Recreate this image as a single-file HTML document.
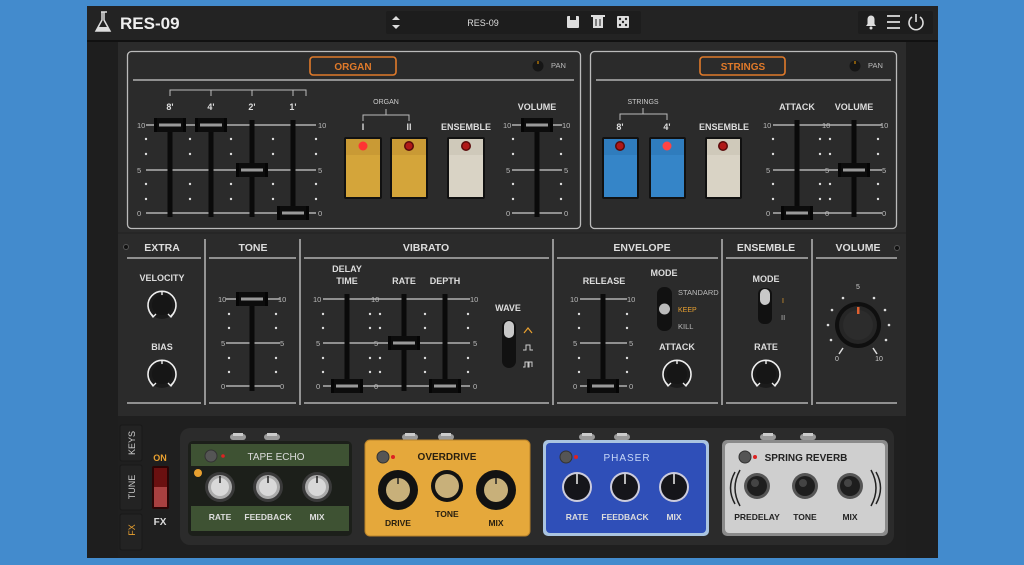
<!DOCTYPE html>
<html><head><meta charset="utf-8"><style>
html,body{margin:0;padding:0;background:#438bcd;width:1024px;height:565px;overflow:hidden}
svg{display:block}
text{font-family:"Liberation Sans",sans-serif;}
.l{font-weight:bold;fill:#ddd;font-size:9px;text-anchor:middle}
.h{font-weight:bold;fill:#ddd;font-size:10.5px;text-anchor:middle}
.s{fill:#bbb;font-size:7.5px}
.sm{fill:#ccc;font-size:7px;text-anchor:middle}
</style></head><body>
<svg width="1024" height="565" viewBox="0 0 1024 565">
<defs>
<g id="hd"><rect x="-16" y="-7" width="32" height="14" rx="2" fill="#0c0c0c"/><rect x="-16" y="-7" width="3" height="14" fill="#050505"/><rect x="13" y="-7" width="3" height="14" fill="#050505"/><rect x="-11" y="-1.5" width="22" height="3" fill="#9a9a9a"/></g>
<g id="kn"><circle r="14" fill="#1b1b1b"/><path d="M-9,11 A14,14 0 1 1 9,11" fill="none" stroke="#eee" stroke-width="1.6"/><path d="M-12,8 l3,4 l3,-3 M12,8 l-3,4 l-3,-3" fill="none" stroke="#eee" stroke-width="1.3"/><line x1="0" y1="-13" x2="0" y2="-8" stroke="#eee" stroke-width="1.4"/><circle r="10" fill="#161616"/></g>
<g id="dot"><circle r="1.2" fill="#ddd"/></g>
<g id="jack"><rect x="-8" y="-3" width="16" height="6" rx="3" fill="#9a9a9a"/><rect x="-5" y="-4" width="10" height="3" fill="#ccc"/></g>
<g id="sk"><circle r="15" fill="#3a3a3a"/><circle r="12" fill="#aaa"/><circle r="9" fill="#d8d8d8"/><line x1="0" y1="-11" x2="0" y2="-4" stroke="#222" stroke-width="1.5"/></g>
<g id="bk"><circle r="15" fill="#ccd"/><circle r="13" fill="#15151a"/><line x1="0" y1="-13" x2="0" y2="-3" stroke="#eee" stroke-width="1.5"/></g>
<g id="rk"><circle r="13" fill="#555"/><circle r="10" fill="#1e1e1e"/><circle cx="-2" cy="-3" r="4" fill="#444"/></g>
<g id="led"><circle r="5" fill="#5a0a0a"/><circle r="3.5" fill="#b01818"/></g>
</defs>

<!-- window -->
<rect x="87" y="6" width="851" height="552" fill="#262626"/>
<rect x="87" y="6" width="851" height="35" fill="#232323"/>
<line x1="87" y1="41" x2="938" y2="41" stroke="#111" stroke-width="2"/>
<rect x="87" y="42" width="31" height="516" fill="#1e1e1e"/>
<rect x="906" y="42" width="32" height="516" fill="#1e1e1e"/>
<rect x="118" y="42" width="788" height="374" fill="#2b2b2b"/>
<rect x="118" y="416" width="788" height="142" fill="#1f1f1f"/>

<!-- topbar -->
<path d="M101,12 h6 M102,12 v8 l-6,11 h14 l-6,-11 v-8" fill="none" stroke="#ddd" stroke-width="1.5"/>
<path d="M98,27 h10 l2,4 h-14z" fill="#ddd"/>
<text x="120" y="29" font-size="17" font-weight="bold" fill="#eee">RES-09</text>
<rect x="386" y="11" width="255" height="23" fill="#1d1d1d" rx="2"/>
<path d="M392,20 l4,-4 l4,4z M392,25 l4,4 l4,-4z" fill="#ddd"/>
<text x="483" y="26" font-size="9" fill="#ddd" text-anchor="middle">RES-09</text>
<rect x="567" y="16" width="12" height="12" rx="1" fill="#ddd"/><rect x="570" y="16" width="6" height="4" fill="#1d1d1d"/>
<rect x="593" y="17" width="10" height="11" fill="#ddd"/><rect x="591" y="15" width="14" height="2" fill="#ddd"/><line x1="596" y1="19" x2="596" y2="26" stroke="#1d1d1d"/><line x1="600" y1="19" x2="600" y2="26" stroke="#1d1d1d"/>
<rect x="617" y="16" width="12" height="12" rx="1" fill="#ddd"/><circle cx="620" cy="19" r="1.2" fill="#222"/><circle cx="626" cy="19" r="1.2" fill="#222"/><circle cx="623" cy="22" r="1.2" fill="#222"/><circle cx="620" cy="25" r="1.2" fill="#222"/><circle cx="626" cy="25" r="1.2" fill="#222"/>
<rect x="858" y="11" width="75" height="23" fill="#1d1d1d" rx="2"/>
<path d="M866,26 h10 l-1.5,-2 v-5 a3.5,3.5 0 0 0 -7,0 v5z" fill="#ddd"/><circle cx="871" cy="28" r="1.5" fill="#ddd"/>
<path d="M887,16 h13 M887,22 h13 M887,28 h13" stroke="#ddd" stroke-width="1.8"/>
<path d="M912,17 a7,7 0 1 0 8,0" fill="none" stroke="#ddd" stroke-width="1.6"/><line x1="916" y1="14" x2="916" y2="22" stroke="#ddd" stroke-width="1.6"/>

<!-- ORGAN panel -->
<rect x="127.5" y="51.5" width="453" height="177" rx="4" fill="none" stroke="#bbb" stroke-width="1.3"/>
<rect x="310" y="57" width="86" height="18" rx="3" fill="none" stroke="#e07a2a" stroke-width="1.6"/>
<text x="353" y="70" font-size="10" font-weight="bold" fill="#e07a2a" text-anchor="middle">ORGAN</text>
<circle cx="538" cy="66" r="5.5" fill="#161616"/><line x1="538" y1="61" x2="538" y2="64" stroke="#e90" stroke-width="1"/>
<text x="551" y="68" class="s">PAN</text>
<line x1="133" y1="80" x2="574" y2="80" stroke="#ccc" stroke-width="1.3"/>
<path d="M170,96 v-6 h136 v6 M211,90 v6 M252,90 v6 M293,90 v6" fill="none" stroke="#bbb" stroke-width="1"/>
<text x="170" y="110" class="l">8'</text><text x="211" y="110" class="l">4'</text><text x="252" y="110" class="l">2'</text><text x="293" y="110" class="l">1'</text>
<g stroke="#ccc" stroke-width="1.2"><line x1="146" y1="125" x2="316" y2="125"/><line x1="146" y1="170" x2="316" y2="170"/><line x1="146" y1="213" x2="316" y2="213"/></g>
<g class="s" font-size="7"><text x="137" y="128">10</text><text x="137" y="173">5</text><text x="137" y="216">0</text><text x="318" y="128">10</text><text x="318" y="173">5</text><text x="318" y="216">0</text></g>
<g><use href="#dot" x="146" y="139"/><use href="#dot" x="146" y="154"/><use href="#dot" x="146" y="184"/><use href="#dot" x="146" y="199"/>
<use href="#dot" x="190" y="139"/><use href="#dot" x="190" y="154"/><use href="#dot" x="190" y="184"/><use href="#dot" x="190" y="199"/>
<use href="#dot" x="231" y="139"/><use href="#dot" x="231" y="154"/><use href="#dot" x="231" y="184"/><use href="#dot" x="231" y="199"/>
<use href="#dot" x="273" y="139"/><use href="#dot" x="273" y="154"/><use href="#dot" x="273" y="184"/><use href="#dot" x="273" y="199"/>
<use href="#dot" x="316" y="139"/><use href="#dot" x="316" y="154"/><use href="#dot" x="316" y="184"/><use href="#dot" x="316" y="199"/></g>
<g fill="#0a0a0a"><rect x="167.5" y="125" width="5" height="92"/><rect x="208.5" y="125" width="5" height="92"/><rect x="249.5" y="120" width="5" height="97"/><rect x="290.5" y="120" width="5" height="97"/></g>
<use href="#hd" x="170" y="125"/><use href="#hd" x="211" y="125"/><use href="#hd" x="252" y="170"/><use href="#hd" x="293" y="213"/>
<text x="386" y="104" class="sm">ORGAN</text>
<path d="M363,121 v-6 h46 v6 M386,109 v6" fill="none" stroke="#bbb" stroke-width="1"/>
<text x="363" y="130" class="l">I</text><text x="409" y="130" class="l">II</text><text x="466" y="130" class="l">ENSEMBLE</text>
<rect x="344" y="137" width="38" height="62" rx="2" fill="#111"/><rect x="346" y="139" width="34" height="58" fill="#d4a53a"/><rect x="346" y="139" width="34" height="16" fill="#c99a35"/><circle cx="363" cy="146" r="4.5" fill="#f33"/>
<rect x="390" y="137" width="38" height="62" rx="2" fill="#111"/><rect x="392" y="139" width="34" height="58" fill="#d4a53a"/><rect x="392" y="139" width="34" height="16" fill="#c99a35"/><use href="#led" x="409" y="146"/>
<rect x="447" y="137" width="38" height="62" rx="2" fill="#111"/><rect x="449" y="139" width="34" height="58" fill="#d9d3c5"/><rect x="449" y="139" width="34" height="16" fill="#cfc9ba"/><use href="#led" x="466" y="146"/>
<text x="537" y="110" class="l">VOLUME</text>
<g stroke="#ccc" stroke-width="1.2"><line x1="512" y1="125" x2="562" y2="125"/><line x1="512" y1="170" x2="562" y2="170"/><line x1="512" y1="213" x2="562" y2="213"/></g>
<g class="s" font-size="7"><text x="503" y="128">10</text><text x="506" y="173">5</text><text x="506" y="216">0</text><text x="562" y="128">10</text><text x="564" y="173">5</text><text x="564" y="216">0</text></g>
<use href="#dot" x="513" y="139"/><use href="#dot" x="513" y="154"/><use href="#dot" x="513" y="184"/><use href="#dot" x="513" y="199"/><use href="#dot" x="561" y="139"/><use href="#dot" x="561" y="154"/><use href="#dot" x="561" y="184"/><use href="#dot" x="561" y="199"/>
<rect x="534.5" y="125" width="5" height="92" fill="#0a0a0a"/><use href="#hd" x="537" y="125"/>

<!-- STRINGS panel -->
<rect x="590.5" y="51.5" width="306" height="177" rx="4" fill="none" stroke="#bbb" stroke-width="1.3"/>
<rect x="700" y="57" width="85" height="18" rx="3" fill="none" stroke="#e07a2a" stroke-width="1.6"/>
<text x="743" y="70" font-size="10" font-weight="bold" fill="#e07a2a" text-anchor="middle">STRINGS</text>
<circle cx="855" cy="66" r="5.5" fill="#161616"/><line x1="855" y1="61" x2="855" y2="64" stroke="#e90"/>
<text x="868" y="68" class="s">PAN</text>
<line x1="596" y1="80" x2="891" y2="80" stroke="#ccc" stroke-width="1.3"/>
<text x="643" y="104" class="sm">STRINGS</text>
<path d="M620,120 v-6 h47 v6 M643,108 v6" fill="none" stroke="#bbb" stroke-width="1"/>
<text x="620" y="130" class="l">8'</text><text x="667" y="130" class="l">4'</text><text x="724" y="130" class="l">ENSEMBLE</text>
<rect x="602" y="137" width="37" height="62" rx="2" fill="#111"/><rect x="604" y="139" width="33" height="58" fill="#3585c8"/><rect x="604" y="139" width="33" height="16" fill="#2f7cbd"/><use href="#led" x="620" y="146"/>
<rect x="649" y="137" width="37" height="62" rx="2" fill="#111"/><rect x="651" y="139" width="33" height="58" fill="#3585c8"/><rect x="651" y="139" width="33" height="16" fill="#2f7cbd"/><circle cx="667" cy="146" r="4.5" fill="#f44"/>
<rect x="705" y="137" width="37" height="62" rx="2" fill="#111"/><rect x="707" y="139" width="33" height="58" fill="#d9d3c5"/><rect x="707" y="139" width="33" height="16" fill="#cfc9ba"/><use href="#led" x="723" y="146"/>
<text x="797" y="110" class="l">ATTACK</text><text x="854" y="110" class="l">VOLUME</text>
<g stroke="#ccc" stroke-width="1.2"><line x1="773" y1="125" x2="882" y2="125"/><line x1="773" y1="170" x2="882" y2="170"/><line x1="773" y1="213" x2="882" y2="213"/></g>
<g class="s" font-size="7"><text x="763" y="128">10</text><text x="766" y="173">5</text><text x="766" y="216">0</text><text x="822" y="128">10</text><text x="825" y="173">5</text><text x="825" y="216">0</text><text x="880" y="128">10</text><text x="882" y="173">5</text><text x="882" y="216">0</text></g>
<use href="#dot" x="773" y="139"/><use href="#dot" x="773" y="154"/><use href="#dot" x="773" y="184"/><use href="#dot" x="773" y="199"/>
<use href="#dot" x="820" y="139"/><use href="#dot" x="820" y="154"/><use href="#dot" x="820" y="184"/><use href="#dot" x="820" y="199"/>
<use href="#dot" x="830" y="139"/><use href="#dot" x="830" y="154"/><use href="#dot" x="830" y="184"/><use href="#dot" x="830" y="199"/>
<use href="#dot" x="878" y="139"/><use href="#dot" x="878" y="154"/><use href="#dot" x="878" y="184"/><use href="#dot" x="878" y="199"/>
<rect x="794.5" y="120" width="5" height="97" fill="#0a0a0a"/><rect x="851.5" y="120" width="5" height="97" fill="#0a0a0a"/>
<use href="#hd" x="797" y="213"/><use href="#hd" x="854" y="170"/>

<!-- lower sections -->
<line x1="118" y1="233" x2="906" y2="233" stroke="#222" stroke-width="1"/>
<g stroke="#ccc" stroke-width="1.3">
<line x1="205" y1="239" x2="205" y2="405"/><line x1="300" y1="239" x2="300" y2="405"/><line x1="553" y1="239" x2="553" y2="405"/><line x1="722" y1="239" x2="722" y2="405"/><line x1="812" y1="239" x2="812" y2="405"/>
<line x1="127" y1="258" x2="201" y2="258"/><line x1="209" y1="258" x2="296" y2="258"/><line x1="304" y1="258" x2="549" y2="258"/><line x1="557" y1="258" x2="718" y2="258"/><line x1="726" y1="258" x2="808" y2="258"/><line x1="816" y1="258" x2="897" y2="258"/>
<line x1="127" y1="403" x2="201" y2="403"/><line x1="209" y1="403" x2="296" y2="403"/><line x1="304" y1="403" x2="549" y2="403"/><line x1="557" y1="403" x2="718" y2="403"/><line x1="726" y1="403" x2="808" y2="403"/><line x1="816" y1="403" x2="897" y2="403"/>
</g>
<circle cx="126" cy="247" r="2.5" fill="#111" stroke="#555"/><circle cx="897" cy="248" r="2.5" fill="#111" stroke="#555"/>
<text x="162" y="251" class="h">EXTRA</text><text x="253" y="251" class="h">TONE</text><text x="426" y="251" class="h">VIBRATO</text><text x="642" y="251" class="h">ENVELOPE</text><text x="766" y="251" class="h">ENSEMBLE</text><text x="858" y="251" class="h">VOLUME</text>
<text x="162" y="281" class="l">VELOCITY</text><use href="#kn" x="162" y="305"/>
<text x="162" y="350" class="l">BIAS</text><use href="#kn" x="162" y="374"/>
<!-- tone -->
<g stroke="#ccc" stroke-width="1.2"><line x1="226" y1="299" x2="280" y2="299"/><line x1="226" y1="343" x2="280" y2="343"/><line x1="226" y1="386" x2="280" y2="386"/></g>
<g class="s" font-size="7"><text x="218" y="302">10</text><text x="221" y="346">5</text><text x="221" y="389">0</text><text x="278" y="302">10</text><text x="280" y="346">5</text><text x="280" y="389">0</text></g>
<use href="#dot" x="229" y="314"/><use href="#dot" x="229" y="328"/><use href="#dot" x="229" y="358"/><use href="#dot" x="229" y="372"/><use href="#dot" x="276" y="314"/><use href="#dot" x="276" y="328"/><use href="#dot" x="276" y="358"/><use href="#dot" x="276" y="372"/>
<rect x="249.5" y="299" width="5" height="92" fill="#0a0a0a"/><use href="#hd" x="252" y="299"/>
<!-- vibrato -->
<text x="347" y="272" class="l">DELAY</text><text x="347" y="284" class="l">TIME</text><text x="404" y="284" class="l">RATE</text><text x="445" y="284" class="l">DEPTH</text>
<g stroke="#ccc" stroke-width="1.2"><line x1="323" y1="299" x2="470" y2="299"/><line x1="323" y1="343" x2="470" y2="343"/><line x1="323" y1="386" x2="470" y2="386"/></g>
<g class="s" font-size="7"><text x="313" y="302">10</text><text x="316" y="346">5</text><text x="316" y="389">0</text><text x="371" y="302">10</text><text x="374" y="346">5</text><text x="374" y="389">0</text><text x="470" y="302">10</text><text x="473" y="346">5</text><text x="473" y="389">0</text></g>
<use href="#dot" x="323" y="314"/><use href="#dot" x="323" y="328"/><use href="#dot" x="323" y="358"/><use href="#dot" x="323" y="372"/>
<use href="#dot" x="370" y="314"/><use href="#dot" x="370" y="328"/><use href="#dot" x="370" y="358"/><use href="#dot" x="370" y="372"/>
<use href="#dot" x="380" y="314"/><use href="#dot" x="380" y="328"/><use href="#dot" x="380" y="358"/><use href="#dot" x="380" y="372"/>
<use href="#dot" x="425" y="314"/><use href="#dot" x="425" y="328"/><use href="#dot" x="425" y="358"/><use href="#dot" x="425" y="372"/>
<use href="#dot" x="468" y="314"/><use href="#dot" x="468" y="328"/><use href="#dot" x="468" y="358"/><use href="#dot" x="468" y="372"/>
<rect x="344.5" y="294" width="5" height="97" fill="#0a0a0a"/><rect x="401.5" y="294" width="5" height="97" fill="#0a0a0a"/><rect x="442.5" y="294" width="5" height="97" fill="#0a0a0a"/>
<use href="#hd" x="347" y="386"/><use href="#hd" x="404" y="343"/><use href="#hd" x="445" y="386"/>
<text x="508" y="311" class="l">WAVE</text>
<rect x="502" y="320" width="14" height="48" rx="7" fill="#111"/><rect x="504" y="321" width="10" height="17" rx="5" fill="#c8c8c8"/>
<path d="M524,333 l4,-5 l4,5" fill="none" stroke="#e8a030" stroke-width="1.2"/>
<path d="M523,350 h3 v-5 h4 v5 h3" fill="none" stroke="#ccc" stroke-width="1"/>
<path d="M523,367 h2 v-5 h3 v5 h1 v-5 h3 v5" fill="none" stroke="#ccc" stroke-width="1"/>
<!-- envelope -->
<text x="604" y="284" class="l">RELEASE</text>
<g stroke="#ccc" stroke-width="1.2"><line x1="580" y1="299" x2="627" y2="299"/><line x1="580" y1="343" x2="627" y2="343"/><line x1="580" y1="386" x2="627" y2="386"/></g>
<g class="s" font-size="7"><text x="570" y="302">10</text><text x="573" y="346">5</text><text x="573" y="389">0</text><text x="627" y="302">10</text><text x="629" y="346">5</text><text x="629" y="389">0</text></g>
<use href="#dot" x="579" y="314"/><use href="#dot" x="579" y="328"/><use href="#dot" x="579" y="358"/><use href="#dot" x="579" y="372"/><use href="#dot" x="627" y="314"/><use href="#dot" x="627" y="328"/><use href="#dot" x="627" y="358"/><use href="#dot" x="627" y="372"/>
<rect x="600.5" y="294" width="5" height="97" fill="#0a0a0a"/><use href="#hd" x="603" y="386"/>
<text x="664" y="276" class="l">MODE</text>
<rect x="657" y="287" width="15" height="44" rx="7" fill="#111"/><circle cx="664.5" cy="309" r="5.5" fill="#bbb"/>
<text x="678" y="295" class="s" font-size="7">STANDARD</text><text x="678" y="312" font-size="7" fill="#e8a030">KEEP</text><text x="678" y="329" class="s" font-size="7">KILL</text>
<text x="677" y="350" class="l">ATTACK</text><use href="#kn" x="677" y="374"/>
<!-- ensemble -->
<text x="766" y="282" class="l">MODE</text>
<rect x="758" y="288" width="14" height="36" rx="6" fill="#111"/><rect x="760" y="289" width="10" height="16" rx="5" fill="#c8c8c8"/>
<text x="782" y="303" font-size="7" fill="#e8a030">I</text><text x="781" y="320" class="s" font-size="7">II</text>
<text x="766" y="350" class="l">RATE</text><use href="#kn" x="766" y="374"/>
<!-- volume big knob -->
<text x="858" y="289" class="sm">5</text><text x="837" y="361" class="sm">0</text><text x="879" y="361" class="sm">10</text>
<g fill="#ddd"><circle cx="843" cy="298" r="1.3"/><circle cx="874" cy="298" r="1.3"/><circle cx="832" cy="310" r="1.3"/><circle cx="885" cy="310" r="1.3"/><circle cx="828" cy="325" r="1.3"/><circle cx="889" cy="325" r="1.3"/><circle cx="831" cy="340" r="1.3"/><circle cx="886" cy="340" r="1.3"/></g>
<path d="M843,348 l-4,6 M873,348 l4,6" stroke="#ddd" stroke-width="1.5"/>
<circle cx="858" cy="325" r="23" fill="#0f0f0f"/><circle cx="858" cy="325" r="19" fill="#262626"/><circle cx="858" cy="325" r="15" fill="#2c2c2c"/>
<rect x="857" y="307" width="2.5" height="7" fill="#e06030"/>

<!-- FX area -->
<rect x="120" y="425" width="22" height="36" rx="2" fill="#232323" stroke="#181818"/>
<rect x="120" y="465" width="22" height="45" rx="2" fill="#232323" stroke="#181818"/>
<rect x="120" y="514" width="22" height="36" rx="2" fill="#232323" stroke="#181818"/>
<text transform="translate(135,443) rotate(-90)" font-size="9" fill="#ccc" text-anchor="middle">KEYS</text>
<text transform="translate(135,487) rotate(-90)" font-size="9" fill="#ccc" text-anchor="middle">TUNE</text>
<text transform="translate(135,530) rotate(-90)" font-size="9" fill="#e8a030" text-anchor="middle">FX</text>
<text x="160" y="461" font-size="9" font-weight="bold" fill="#e8a030" text-anchor="middle">ON</text>
<rect x="152" y="466" width="17" height="43" rx="2" fill="#2a0505"/><rect x="154" y="468" width="13" height="19" fill="#6a1010"/><rect x="154" y="487" width="13" height="20" fill="#a84040"/>
<text x="160" y="525" font-size="10" font-weight="bold" fill="#ddd" text-anchor="middle">FX</text>
<rect x="180" y="428" width="714" height="117" rx="10" fill="#2b2b2b"/>
<use href="#jack" x="238" y="437"/><use href="#jack" x="272" y="437"/><use href="#jack" x="410" y="437"/><use href="#jack" x="446" y="437"/><use href="#jack" x="587" y="437"/><use href="#jack" x="622" y="437"/><use href="#jack" x="768" y="437"/><use href="#jack" x="808" y="437"/>
<!-- tape echo -->
<rect x="188" y="441" width="164" height="95" rx="5" fill="#1c1f1a"/>
<rect x="191" y="444" width="158" height="22" fill="#3e5233"/>
<rect x="191" y="506" width="158" height="25" fill="#3e5233"/>
<circle cx="211" cy="456" r="6" fill="#555" stroke="#333"/><circle cx="223" cy="456" r="1.8" fill="#d22"/>
<text x="276" y="460" font-size="10" fill="#ddd" text-anchor="middle">TAPE ECHO</text>
<circle cx="198" cy="473" r="4" fill="#e8a030"/>
<use href="#sk" x="220" y="487"/><use href="#sk" x="268" y="487"/><use href="#sk" x="317" y="487"/>
<text x="220" y="520" font-size="8.5" font-weight="bold" fill="#ddd" text-anchor="middle">RATE</text><text x="268" y="520" font-size="8.5" font-weight="bold" fill="#ddd" text-anchor="middle">FEEDBACK</text><text x="317" y="520" font-size="8.5" font-weight="bold" fill="#ddd" text-anchor="middle">MIX</text>
<!-- overdrive -->
<rect x="365" y="440" width="165" height="96" rx="5" fill="#e5a83b" stroke="#b8822a"/>
<circle cx="383" cy="457" r="6" fill="#555" stroke="#333"/><circle cx="393" cy="457" r="2" fill="#d22"/>
<text x="447" y="460" font-size="10" font-weight="bold" fill="#2a2010" text-anchor="middle">OVERDRIVE</text>
<circle cx="398" cy="490" r="20" fill="#121212"/><circle cx="398" cy="490" r="12" fill="#c8b07a"/><line x1="398" y1="478" x2="398" y2="484" stroke="#222" stroke-width="1.5"/>
<circle cx="447" cy="486" r="16" fill="#121212"/><circle cx="447" cy="486" r="12" fill="#c8b07a"/>
<circle cx="496" cy="490" r="20" fill="#121212"/><circle cx="496" cy="490" r="12" fill="#c8b07a"/><line x1="496" y1="478" x2="496" y2="484" stroke="#222" stroke-width="1.5"/>
<text x="398" y="526" font-size="8.5" font-weight="bold" fill="#2a2010" text-anchor="middle">DRIVE</text><text x="447" y="517" font-size="8.5" font-weight="bold" fill="#2a2010" text-anchor="middle">TONE</text><text x="496" y="526" font-size="8.5" font-weight="bold" fill="#2a2010" text-anchor="middle">MIX</text>
<!-- phaser -->
<rect x="543" y="440" width="166" height="96" rx="5" fill="#aac4e0"/>
<rect x="546" y="443" width="160" height="90" rx="4" fill="#2f4fb8"/>
<circle cx="566" cy="457" r="6" fill="#555" stroke="#333"/><circle cx="576" cy="457" r="2" fill="#d22"/>
<text x="627" y="461" font-size="10" fill="#c8d8f8" text-anchor="middle" letter-spacing="1">PHASER</text>
<use href="#bk" x="577" y="487"/><use href="#bk" x="625" y="487"/><use href="#bk" x="674" y="487"/>
<text x="577" y="520" font-size="8.5" font-weight="bold" fill="#ddd" text-anchor="middle">RATE</text><text x="625" y="520" font-size="8.5" font-weight="bold" fill="#ddd" text-anchor="middle">FEEDBACK</text><text x="674" y="520" font-size="8.5" font-weight="bold" fill="#ddd" text-anchor="middle">MIX</text>
<!-- spring reverb -->
<rect x="722" y="440" width="166" height="96" rx="5" fill="#8a8a8a"/>
<rect x="725" y="443" width="160" height="90" rx="4" fill="#cfcfcf"/>
<circle cx="745" cy="457" r="6" fill="#555" stroke="#333"/><circle cx="755" cy="457" r="2" fill="#d22"/>
<text x="806" y="461" font-size="10" font-weight="bold" fill="#222" text-anchor="middle" font-family="Liberation Serif">SPRING REVERB</text>
<path d="M740,470 q-10,18 0,36 M735,472 q-9,16 0,32 M871,470 q10,18 0,36 M876,472 q9,16 0,32" fill="none" stroke="#222" stroke-width="1.5"/>
<use href="#rk" x="757" y="486"/><use href="#rk" x="805" y="486"/><use href="#rk" x="850" y="486"/>
<text x="757" y="520" font-size="8.5" font-weight="bold" fill="#222" text-anchor="middle">PREDELAY</text><text x="805" y="520" font-size="8.5" font-weight="bold" fill="#222" text-anchor="middle">TONE</text><text x="850" y="520" font-size="8.5" font-weight="bold" fill="#222" text-anchor="middle">MIX</text>
</svg>
</body></html>
